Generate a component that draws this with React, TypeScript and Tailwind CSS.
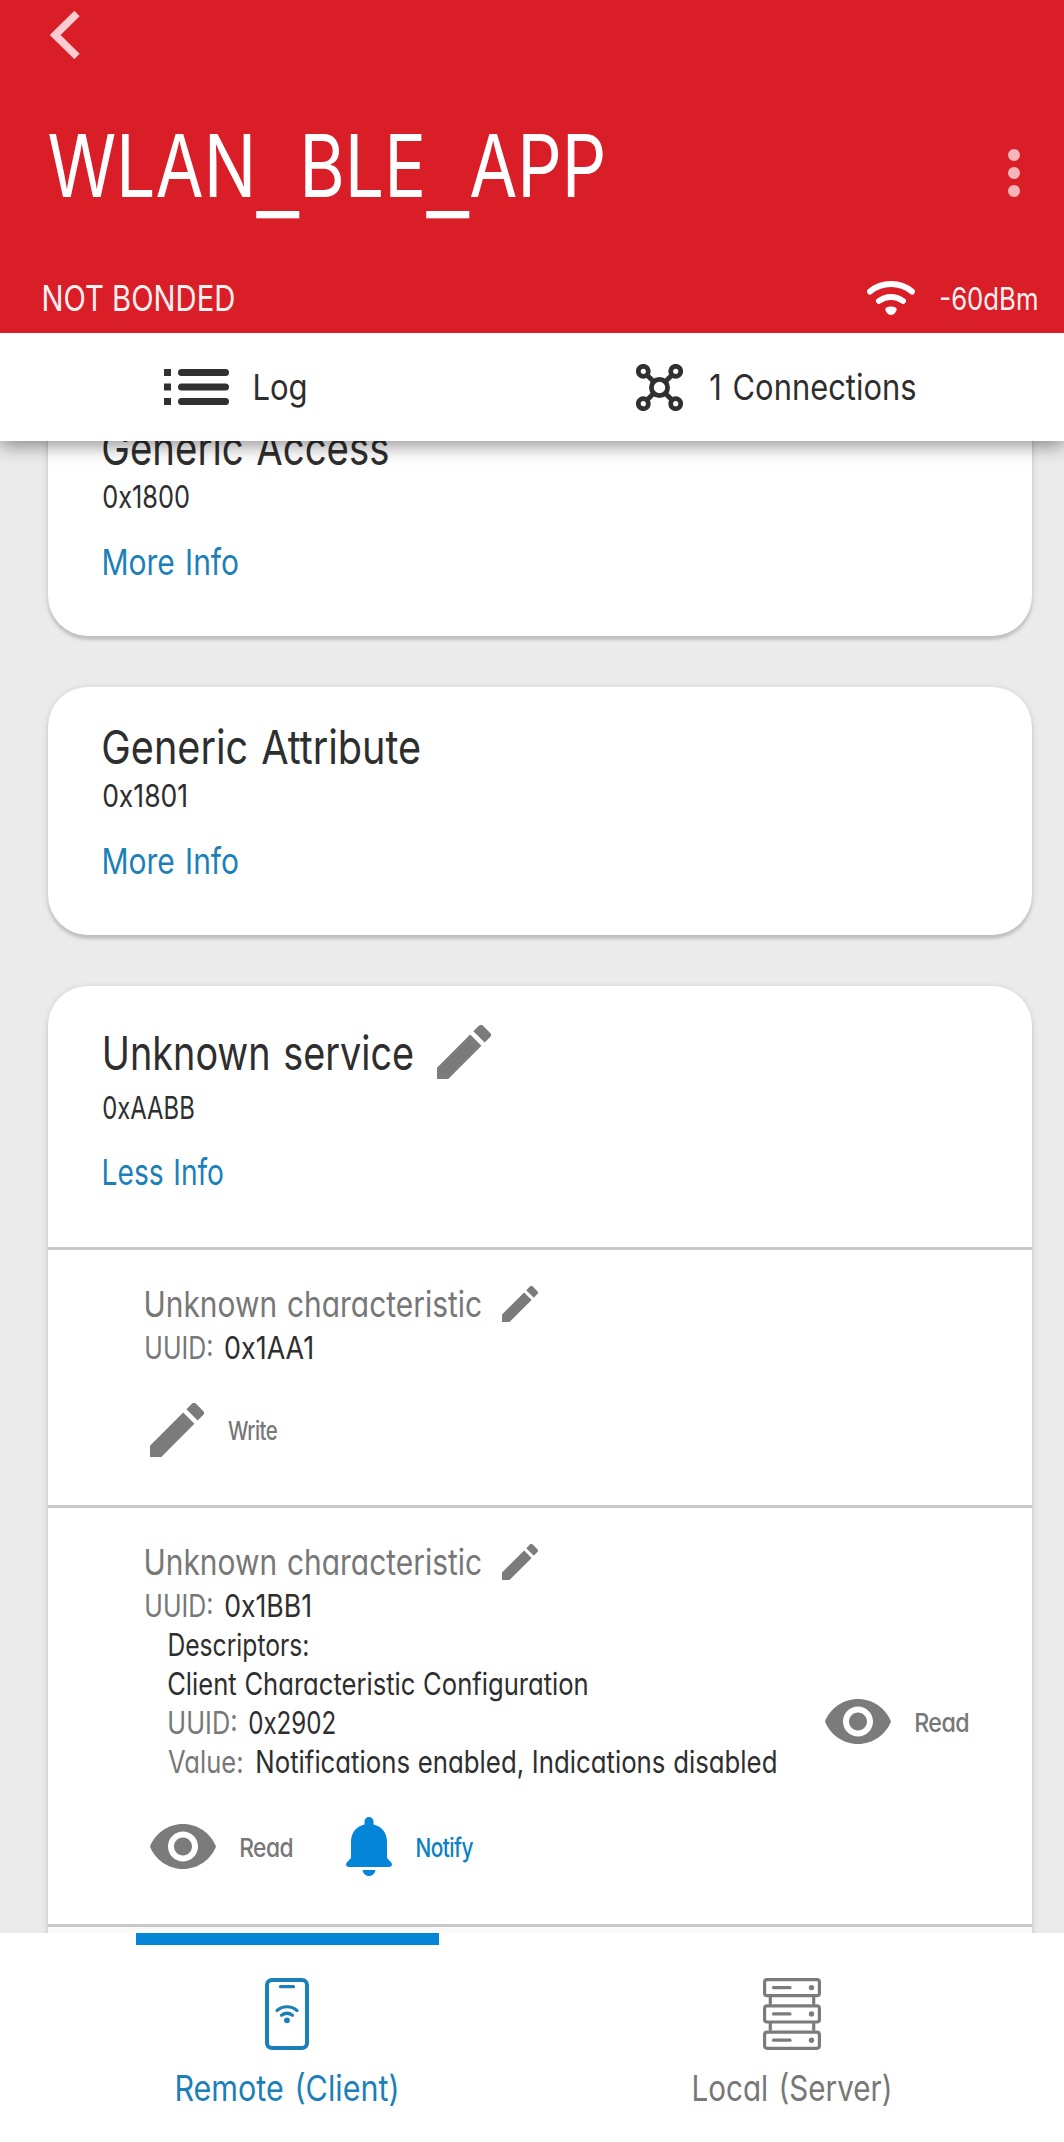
import { useLayoutEffect, useRef, type ReactNode } from "react";
import clsx from "clsx";

/** One line of type whose ink is fitted to `w` pixels wide. */
function Line({ children, w, className, content }: { children: string; w: number; className?: string; content?: ReactNode }) {
  const ref = useRef<HTMLSpanElement>(null);
  useLayoutEffect(() => {
    const el = ref.current;
    if (!el) return;
    el.style.transform = "none";
    const advance = el.getBoundingClientRect().width;
    const cs = getComputedStyle(el);
    const ctx = document.createElement("canvas").getContext("2d");
    let left = 0;
    let right = 0;
    if (ctx) {
      ctx.font = `${cs.fontWeight} ${cs.fontSize} ${cs.fontFamily}`;
      const m = ctx.measureText(children);
      left = -m.actualBoundingBoxLeft;
      right = m.width - m.actualBoundingBoxRight;
    }
    const scale = w / (advance - left - right);
    el.style.transform = `translateX(${-left * scale}px) scaleX(${scale})`;
  }, [children, w]);
  return (
    <span className={clsx("block shrink-0 whitespace-nowrap", className)} style={{ width: w }}>
      <span ref={ref} className="inline-block origin-left">
        {content ?? children}
      </span>
    </span>
  );
}

const H1 = "text-[47px] leading-[53px] -mb-px font-[380] text-[#2e2e2e] [word-spacing:0.05em]";
const H2 = "relative top-px text-[35.5px] leading-[36px] font-[380] text-[#777777] [word-spacing:0.05em]";
const BODY = "relative top-px text-[30.5px] font-[380] [word-spacing:0.02em]";
const DARK = "text-[#2e2e2e]";
const MUTED = "text-[#777777]";
const LINK = "relative top-px text-[35.5px] leading-[40px] font-[390] text-[#1b80b8] [word-spacing:0.06em]";
const TAB = "relative top-px text-[35.5px] leading-[40px] font-[380] [word-spacing:0.07em]";
const ACTION = "relative top-px text-[26px] leading-[40px] font-[550] tracking-tight";

function Pencil({ className }: { className: string }) {
  return (
    <svg viewBox="3 3 18 18" className={clsx("shrink-0 fill-[#7b7b7b]", className)}>
      <path d="M3 17.25V21h3.75L17.81 9.94l-3.75-3.75L3 17.25zM20.71 7.04a1 1 0 0 0 0-1.41l-2.34-2.34a1 1 0 0 0-1.41 0l-1.83 1.83 3.75 3.75 1.83-1.83z" />
    </svg>
  );
}

function Eye() {
  return (
    <svg viewBox="1 4.5 22 15" className="h-[45px] w-[66px] shrink-0 fill-[#7b7b7b]">
      <path d="M12 4.5C7 4.5 2.73 7.61 1 12c1.73 4.39 6 7.5 11 7.5s9.27-3.11 11-7.5c-1.73-4.39-6-7.5-11-7.5zM12 17c-2.76 0-5-2.24-5-5s2.24-5 5-5 5 2.24 5 5-2.24 5-5 5zm0-8c-1.66 0-3 1.34-3 3s1.34 3 3 3 3-1.34 3-3-1.34-3-3-3z" />
    </svg>
  );
}

function Bell() {
  return (
    <svg viewBox="0 0 46 59" className="h-[59px] w-[46px] shrink-0 fill-[#0485d8]">
      <path d="M18.5 4.5a4.5 4.5 0 0 1 9 0V7.6C36 9.5 41 16 41 25v16l4 4.2c2 2.3.7 4.8-2 4.8H3c-2.7 0-4-2.5-2-4.8L5 41V25C5 16 10 9.5 18.5 7.6z" />
      <path d="M16.5 53h13c-.6 3.5-3 6-6.5 6s-5.9-2.5-6.5-6z" />
    </svg>
  );
}

function Network() {
  const corners = [
    [7.3, 7.3],
    [39.7, 7.3],
    [7.3, 39.7],
    [39.7, 39.7],
  ];
  return (
    <svg viewBox="0 0 47 47" className="size-[47px] shrink-0 fill-none stroke-[#303030] [stroke-width:4.8]">
      {corners.map(([x, y]) => (
        <circle key={`${x}-${y}`} cx={x} cy={y} r="5" />
      ))}
      <circle cx="23.5" cy="23.5" r="8.1" />
      <path d="M11 11l7 7M36 11l-7 7M11 36l7-7M36 36l-7-7" />
    </svg>
  );
}

function ListIcon() {
  return (
    <svg viewBox="0 0 65 36" className="h-[36px] w-[65px] shrink-0 fill-[#303030]">
      {[0, 14.5, 29].map((y) => (
        <g key={y}>
          <rect x="0" y={y} width="7" height="7" />
          <rect x="14" y={y} width="51" height="7" rx="3.5" />
        </g>
      ))}
    </svg>
  );
}

function Wifi() {
  return (
    <svg viewBox="0 0 48 34" className="h-[34px] w-[48px] shrink-0 fill-none stroke-white [stroke-linecap:round] [stroke-width:6]">
      <path d="M3 10.5C15 .5 33 .5 45 10.5M12 20C19 14.5 29 14.5 36 20" />
      <path d="M24 25.5c3.5 0 5.7 1.3 5.7 3S27 34 24 34s-5.7-3.8-5.7-5.5 2.2-3 5.7-3z" className="fill-white stroke-none" />
    </svg>
  );
}

function Phone() {
  return (
    <svg viewBox="0 0 44 72" className="h-[72px] w-[44px] fill-none stroke-[#1b80b8] [stroke-linecap:round] [stroke-width:3.2]">
      <rect x="2" y="2" width="40" height="68" rx="5" className="[stroke-width:4]" />
      <path d="M15.5 8.7h13M12 32.5c6-5 14-5 20 0M16.5 37.3c3.5-2.6 7.5-2.6 11 0" />
      <circle cx="22" cy="42.3" r="2.9" className="fill-[#1b80b8] stroke-none" />
    </svg>
  );
}

function Server() {
  return (
    <svg viewBox="0 0 58 72" className="h-[72px] w-[58px] fill-none stroke-[#7b7b7b] [stroke-linecap:round] [stroke-width:3.2]">
      {[0, 26.3, 52.6].map((y) => (
        <g key={y}>
          <rect x="1.6" y={y + 1.6} width="54.8" height="16.1" rx="2.5" />
          <path d={`M10.5 ${y + 9.6}h16.5`} />
          <circle cx="48.5" cy={y + 9.6} r="2.7" className="fill-[#7b7b7b] stroke-none" />
        </g>
      ))}
      <path d="M7.3 19.5v6M50.7 19.5v6M7.3 45.5v6M50.7 45.5v6" />
    </svg>
  );
}

function Card({ className, children }: { className?: string; children: ReactNode }) {
  return (
    <section
      className={clsx(
        "overflow-hidden rounded-[40px] bg-white shadow-[0_4px_3px_rgba(0,0,0,0.13),0_1px_7px_rgba(0,0,0,0.12)]",
        className,
      )}
    >
      {children}
    </section>
  );
}

function CollapsedService({ name, nameW, id, idW, className }: { name: string; nameW: number; id: string; idW: number; className?: string }) {
  return (
    <Card className={clsx("h-[248px] pt-[33px] pl-[55px]", className)}>
      <Line w={nameW} className={H1}>{name}</Line>
      <Line w={idW} className={clsx("mt-[6px] leading-[34px]", BODY, DARK)}>{id}</Line>
      <Line w={134} className={clsx("mt-[28.5px] ml-px", LINK)}>More Info</Line>
    </Card>
  );
}

function CharacteristicHead({ id, idW }: { id: string; idW: number }) {
  return (
    <>
      <div className="flex items-center">
        <Line w={335} className={clsx("ml-px", H2)}>Unknown characteristic</Line>
        <Pencil className="ml-[21px] size-[36px]" />
      </div>
      <div className="mt-[8px] flex gap-[13px]">
        <Line w={66} className={clsx("ml-px leading-[34px]", BODY, MUTED)}>UUID:</Line>
        <Line w={idW} className={clsx("leading-[34px]", BODY, DARK)}>{id}</Line>
      </div>
    </>
  );
}

function Underscore() {
  return <span className="relative top-[14px] text-[119px] leading-[0] font-light">_</span>;
}

export default function App() {
  return (
    <div className="flex h-[2142px] w-[1064px] flex-col overflow-hidden bg-white font-['Inter',sans-serif] [font-feature-settings:'cv11']">
      <header className="h-[333px] shrink-0 bg-[#d91e28] pt-[11px] text-white">
        <svg viewBox="0 0 30 48" className="ml-[50px] h-[48px] w-[30px] fill-none stroke-[#fbcdd2] [stroke-width:7.5]">
          <path d="M27 2.5L5.2 24 27 45.5" />
        </svg>
        <div className="mt-[64px] flex h-[100px] items-center justify-between pr-[44px] pl-[49px]">
          <Line
            w={554}
            className="mb-[14px] text-[86.5px] leading-[100px]"
            content={
              <>
                WLAN
                <Underscore />
                BLE
                <Underscore />
                APP
              </>
            }
          >
            WLAN_BLE_APP
          </Line>
          <div className="flex flex-col gap-[6px]">
            <i className="size-3 rounded-full bg-[#f5b5ba]" />
            <i className="size-3 rounded-full bg-[#f5b5ba]" />
            <i className="size-3 rounded-full bg-[#f5b5ba]" />
          </div>
        </div>
        <div className="mt-[50px] flex h-[50px] items-center pr-[27px] pl-[44px]">
          <Line w={190} className="relative top-px text-[35.5px] leading-[50px] text-[#fff0f0]">NOT BONDED</Line>
          <div className="ml-auto flex items-center gap-[26px]">
            <Wifi />
            <Line w={96} className="relative top-px text-[30.5px] leading-[50px] text-[#fff0f0]">-60dBm</Line>
          </div>
        </div>
      </header>

      <div className="relative z-10 grid h-[108px] shrink-0 grid-cols-2 bg-white shadow-[0_4px_18px_rgba(0,0,0,0.45)] [clip-path:inset(0_0_-40px_0)]">
        <div className="flex items-center gap-[26px] pl-[164px]">
          <ListIcon />
          <Line w={51} className={clsx(TAB, DARK)}>Log</Line>
        </div>
        <div className="flex items-center gap-[27px] pl-[104px]">
          <Network />
          <Line w={205} className={clsx(TAB, DARK)}>1 Connections</Line>
        </div>
      </div>

      <main className="flex h-[1492px] shrink-0 flex-col gap-[51px] overflow-hidden bg-[#ebebeb] pr-[32px] pl-[48px] [&>*]:shrink-0">
        <CollapsedService className="-mt-[53px]" name="Generic Access" nameW={285} id="0x1800" idW={86} />
        <CollapsedService name="Generic Attribute" nameW={317} id="0x1801" idW={83} />
        <Card className="h-[1100px]">
          <div className="h-[261px] pt-[39px] pl-[55px]">
            <div className="flex h-[54px] items-center gap-[24px]">
              <Line w={308} className={clsx("ml-[2px]", H1)}>Unknown service</Line>
              <Pencil className="size-[54px]" />
            </div>
            <Line w={91} className={clsx("mt-[11px] leading-[34px]", BODY, DARK)}>0xAABB</Line>
            <Line w={119} className={clsx("mt-[28px] ml-px", LINK)}>Less Info</Line>
          </div>

          <div className="h-[258px] border-t-[3px] border-[#c9c9c9] pt-[36px] pl-[97px]">
            <CharacteristicHead id="0x1AA1" idW={87} />
            <div className="mt-[39px] ml-[5px] flex h-[54px] items-center gap-[24px]">
              <Pencil className="size-[54px]" />
              <Line w={49} className={clsx(ACTION, MUTED)}>Write</Line>
            </div>
          </div>

          <div className="h-[419px] border-t-[3px] border-[#c9c9c9] pt-[36px] pl-[97px]">
            <CharacteristicHead id="0x1BB1" idW={85} />
            <div className="mt-[2px] ml-[23px] flex items-center">
              <div className="w-[657px]">
                <Line w={139} className={clsx("ml-px leading-[39px]", BODY, DARK)}>Descriptors:</Line>
                <Line w={419} className={clsx("leading-[39px]", BODY, DARK)}>Client Characteristic Configuration</Line>
                <div className="flex gap-[13px]">
                  <Line w={67} className={clsx("ml-px leading-[39px]", BODY, MUTED)}>UUID:</Line>
                  <Line w={86} className={clsx("leading-[39px]", BODY, DARK)}>0x2902</Line>
                </div>
                <div className="flex gap-[15px]">
                  <Line w={74} className={clsx("leading-[39px]", BODY, MUTED)}>Value:</Line>
                  <Line w={519} className={clsx("leading-[39px]", BODY, DARK)}>Notifications enabled, Indications disabled</Line>
                </div>
              </div>
              <div className="mt-[39px] flex items-center gap-[25px]">
                <Eye />
                <Line w={52} className={clsx(ACTION, MUTED)}>Read</Line>
              </div>
            </div>
            <div className="mt-[37px] ml-[5px] flex h-[59px] items-center">
              <Eye />
              <Line w={51} className={clsx("ml-[25px]", ACTION, MUTED)}>Read</Line>
              <span className="ml-[54px]">
                <Bell />
              </span>
              <Line w={56} className={clsx("ml-[25px] text-[#0b80c8]", ACTION)}>Notify</Line>
            </div>
          </div>

          <div className="h-[162px] border-t-[3px] border-[#c9c9c9] bg-[#f9f9f9]" />
        </Card>
      </main>

      <nav className="grid h-[209px] shrink-0 grid-cols-[575px_1fr] bg-white">
        <div className="flex flex-col items-center">
          <div className="h-[12px] w-[303px] bg-[#0485d8]" />
          <div className="mt-[33px] mr-[2px]">
            <Phone />
          </div>
          <Line w={220} className={clsx("mt-[18px] mr-[2px] text-[#1b80b8]", TAB)}>Remote (Client)</Line>
        </div>
        <div className="ml-[97px] flex w-[240px] flex-col items-center pt-[45px]">
          <Server />
          <Line w={196} className={clsx("mt-[18px]", TAB, MUTED)}>Local (Server)</Line>
        </div>
      </nav>
    </div>
  );
}
